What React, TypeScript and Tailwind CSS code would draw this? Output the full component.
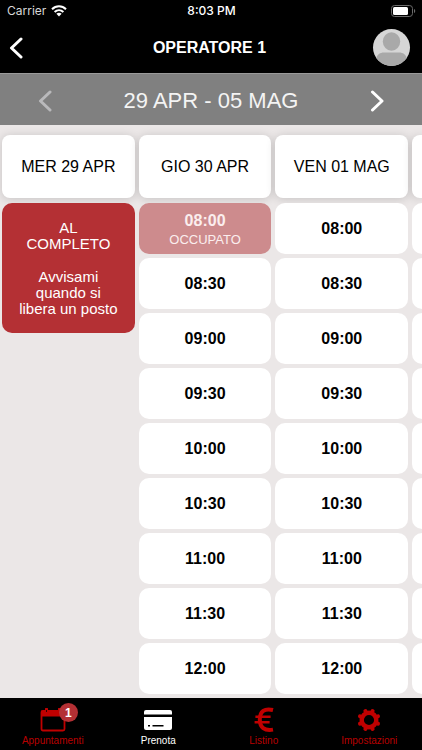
import type { ReactNode } from "react";

const TIMES = ["08:00", "08:30", "09:00", "09:30", "10:00", "10:30", "11:00", "11:30", "12:00"];

type Day = { label: string; full?: boolean; busy?: string[] };

const DAYS: Day[] = [
  { label: "MER 29 APR", full: true },
  { label: "GIO 30 APR", busy: ["08:00"] },
  { label: "VEN 01 MAG" },
];

function Chevron({ direction }: { direction: "left" | "right" }) {
  return (
    <svg width="14" height="22" viewBox="0 0 14 22" fill="none" stroke="currentColor" strokeWidth="3" strokeLinecap="round" strokeLinejoin="round" aria-hidden="true">
      <path d={direction === "left" ? "M12 2 L2.5 11 L12 20" : "M2.5 2 L12 11 L2.5 20"} />
    </svg>
  );
}

function StatusBar() {
  return (
    <div className="grid h-[22px] grid-cols-3 items-center pr-[6px] pl-[7px] font-['Inter',sans-serif] text-[12px] leading-[22px]">
      <div className="flex items-center gap-[5px] text-[#d8d8d8]">
        <span>Carrier</span>
        <svg width="16" height="12" viewBox="0 0 16 12" fill="none" stroke="#fff" strokeWidth="2" aria-label="Wi-Fi">
          <path d="M1 4.2 C5 0.3 11 0.3 15 4.2" />
          <path d="M3.6 7 C6.2 4.6 9.8 4.6 12.4 7" />
          <path d="M8 11.4 L5.4 8.8 C6.9 7.5 9.1 7.5 10.6 8.8 Z" fill="#fff" stroke="none" />
        </svg>
      </div>
      <span className="text-center font-medium">8:03 PM</span>
      <svg className="justify-self-end" width="25" height="12" viewBox="0 0 25 12" aria-label="Batteria">
        <rect x="0.5" y="0.5" width="21" height="11" rx="3" fill="none" stroke="#6b6b6b" />
        <rect x="2" y="2" width="15" height="8" rx="1.5" fill="#fff" />
        <path d="M23 4 C24.6 4.4 24.6 7.6 23 8 Z" fill="#6b6b6b" />
      </svg>
    </div>
  );
}

function Header() {
  return (
    <header className="shrink-0 bg-black text-white">
      <StatusBar />
      <div className="grid h-[51px] grid-cols-[1fr_auto_1fr] items-center pr-3 pl-[9px]">
        <button type="button" aria-label="Indietro" className="justify-self-start">
          <Chevron direction="left" />
        </button>
        <h1 className="text-[16px] leading-5 font-bold">OPERATORE 1</h1>
        <button type="button" aria-label="Profilo" className="size-[37px] justify-self-end overflow-hidden rounded-full bg-[#d6d6d6]">
          <svg width="37" height="37" viewBox="0 0 37 37" fill="#a9a9a9" aria-hidden="true">
            <ellipse cx="18.5" cy="12.5" rx="8.7" ry="9.3" />
            <path d="M3 37 V30 C4 25.5 7 23.5 11 23.5 H26 C30 23.5 33 25.5 34 30 V37 Z" />
          </svg>
        </button>
      </div>
    </header>
  );
}

function WeekBar() {
  return (
    <div className="flex h-[52px] shrink-0 items-center justify-between border-t border-[#9a9a9a] bg-[#808080] px-[38px] pt-[2px] text-white">
      <button type="button" aria-label="Settimana precedente" className="text-[#b9b9bb]">
        <Chevron direction="left" />
      </button>
      <h2 className="text-[22px] leading-6 text-[#f4f4f4]">29 APR - 05 MAG</h2>
      <button type="button" aria-label="Settimana successiva">
        <Chevron direction="right" />
      </button>
    </div>
  );
}

function DayColumn({ day }: { day: Day }) {
  return (
    <section className="w-[31.6%] shrink-0">
      <h3 className="flex h-[63px] items-center justify-center rounded-lg bg-white text-[16px] leading-5 whitespace-nowrap shadow-[0_1px_10px_rgba(0,0,0,0.16)]">
        {day.label}
      </h3>
      <div className="mt-[5px] flex flex-col gap-1">
        {day.full ? (
          <button type="button" className="flex h-[130px] flex-col items-center justify-center rounded-[10px] bg-[#b43034] px-4 text-[15px] leading-4 text-white">
            <span>
              AL
              <br />
              COMPLETO
            </span>
            <span className="mt-[17px]">Avvisami quando si libera un posto</span>
          </button>
        ) : (
          TIMES.map((time) =>
            day.busy?.includes(time) ? (
              <button key={time} type="button" disabled className="h-[51px] rounded-[10px] bg-[#cd8b8d] pt-[3px] text-[#fbeeee]">
                <span className="block text-[16px] leading-[18px] font-bold">{time}</span>
                <span className="block text-[13px] leading-[19px]">OCCUPATO</span>
              </button>
            ) : (
              <button key={time} type="button" className="h-[51px] rounded-[10px] bg-white text-[16px] leading-5 font-bold">
                {time}
              </button>
            ),
          )
        )}
      </div>
    </section>
  );
}

/* Edge of the following day, hinting that the list scrolls sideways. */
function NextDayEdge() {
  return (
    <div className="flex-1" aria-hidden="true">
      <div className="h-[63px] rounded-l-lg bg-white shadow-[0_1px_10px_rgba(0,0,0,0.16)]" />
      <div className="mt-[5px] flex flex-col gap-1">
        {TIMES.map((time) => (
          <div key={time} className="h-[51px] rounded-l-[10px] bg-white" />
        ))}
      </div>
    </div>
  );
}

function Tab({ label, active, children }: { label: string; active?: boolean; children: ReactNode }) {
  return (
    <a
      href="#"
      aria-current={active ? "page" : undefined}
      className={`flex flex-1 flex-col items-center pt-[7px] text-[10px] leading-3 ${active ? "text-white" : "text-[#b80000]"}`}
    >
      <span className="relative flex h-[30px] items-center justify-center">{children}</span>
      <span>{label}</span>
    </a>
  );
}

function TabBar() {
  return (
    <nav className="flex h-[52px] shrink-0 bg-black">
      <Tab label="Appuntamenti">
        <svg width="26" height="24" viewBox="0 0 26 24" aria-hidden="true">
          <rect x="1.5" y="3" width="23" height="19.5" rx="1.5" fill="none" stroke="#c00000" strokeWidth="1.8" />
          <path d="M1 2.5 H25 V8.5 H1 Z" fill="#c00000" />
          <path d="M6.5 1 V4 M19.5 1 V4" stroke="#c00000" strokeWidth="3" strokeLinecap="round" />
          <path d="M6.5 2 V4" stroke="#300" strokeWidth="1" />
        </svg>
        <span className="absolute -top-[2px] left-[19px] flex size-[19px] items-center justify-center rounded-full bg-[#b43034] text-[12px] font-bold text-white">
          1
        </span>
      </Tab>
      <Tab label="Prenota" active>
        <svg width="28" height="20" viewBox="0 0 28 20" fill="#fff" aria-hidden="true">
          <path d="M2 0 H26 Q28 0 28 2 V4.6 H0 V2 Q0 0 2 0 Z" />
          <path d="M0 7 H28 V18 Q28 20 26 20 H2 Q0 20 0 18 Z" />
          <path d="M4 15.7 H6 M8.5 15.7 H19.5" stroke="#000" strokeWidth="1.4" />
        </svg>
      </Tab>
      <Tab label="Listino">
        <svg width="20" height="26" viewBox="0 0 20 26" fill="none" stroke="#c00000" aria-hidden="true">
          <path d="M19 3 C10.5 1 5.8 4.4 5.8 12.5 C5.8 20.6 10.5 24 19 22.6" strokeWidth="4" />
          <path d="M1.4 9.8 H16.6 M0.6 15.2 H15.6" strokeWidth="2.6" />
        </svg>
      </Tab>
      <Tab label="Impostazioni">
        <svg width="24" height="24" viewBox="0 0 24 24" fill="none" stroke="#c00000" aria-hidden="true">
          <circle cx="12" cy="12" r="7.3" strokeWidth="4.4" />
          <path
            d="M8.4 3 L9 4.4 M15.6 3 L15 4.4 M21 8.4 L19.6 9 M21 15.6 L19.6 15 M15.6 21 L15 19.6 M8.4 21 L9 19.6 M3 15.6 L4.4 15 M3 8.4 L4.4 9"
            strokeWidth="4"
            strokeLinecap="round"
          />
        </svg>
      </Tab>
    </nav>
  );
}

export default function App() {
  return (
    <div className="flex h-screen flex-col overflow-hidden bg-[#ebe7e7] font-['Liberation_Sans',Arial,sans-serif] text-black">
      <Header />
      <WeekBar />
      <main className="flex min-h-0 flex-1 gap-1 overflow-hidden pt-[10px] pl-[2px]">
        {DAYS.map((day) => (
          <DayColumn key={day.label} day={day} />
        ))}
        <NextDayEdge />
      </main>
      <TabBar />
    </div>
  );
}
